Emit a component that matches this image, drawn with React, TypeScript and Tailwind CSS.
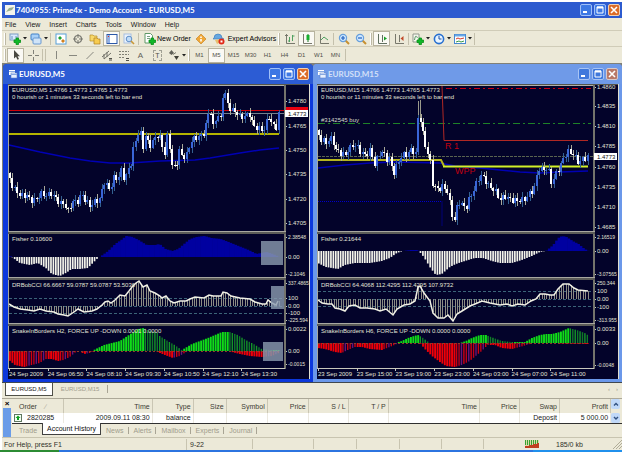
import React from 'react';
import clsx from 'clsx';

type Point = [number, number];

interface Label {
  text: string;
  y: number;
}

interface ChartData {
  title: string;
  x: number;
  info: string[];
  candles: Point[];
  jitter: number;
  fisherBase: number;
  fisher: Point[];
  cciBase: number;
  cciLevels: number[];
  cci: Point[];
  snakeBase: number;
  snakeUp: Point[];
  snakeDown: Point[];
  labels: string[];
  prices: Label[];
  times: string[];
  current: Label;
}

const STEP = 2.42;

const m5: ChartData = {
  title: 'EURUSD,M5',
  x: 8,
  info: ['EURUSD,M5  1.4766 1.4773 1.4765 1.4773', '0 hourish or 1 minutes 33 seconds left to bar end'],
  candles: [
    [9, 175], [12, 185], [15, 190], [18, 192], [20, 196], [25, 195], [30, 199], [34, 201], [38, 197], [42, 193],
    [47, 196], [51, 193], [54, 197], [57, 199], [60, 204], [64, 203], [68, 211], [73, 201], [77, 202], [82, 194],
    [86, 201], [90, 206], [95, 201], [100, 199], [104, 182], [108, 187], [110, 190], [114, 178], [118, 179], [121, 170],
    [124, 178], [127, 174], [131, 163], [134, 146], [138, 133], [141, 134], [143, 147], [146, 134], [149, 146], [152, 143],
    [157, 135], [160, 138], [165, 154], [168, 132], [172, 165], [176, 168], [179, 150], [183, 157], [187, 155], [190, 143],
    [195, 138], [200, 137], [205, 132], [208, 114], [211, 112], [213, 128], [216, 118], [218, 115], [221, 120], [223, 95],
    [225, 93], [228, 105], [232, 110], [236, 112], [240, 117], [245, 116], [250, 114], [253, 126], [258, 128], [263, 131],
    [266, 124], [268, 114], [272, 124], [276, 128], [278, 114],
  ],
  jitter: 3,
  fisherBase: 257,
  fisher: [
    [9, 256], [12, 257], [16, 260], [20, 263], [30, 265], [38, 263], [46, 268], [52, 274], [60, 276], [66, 273],
    [72, 269], [80, 269], [88, 268], [93, 263], [98, 258], [101, 256], [108, 251], [115, 244], [121, 240], [126, 236],
    [132, 237], [138, 240], [146, 245], [155, 245], [159, 244], [165, 249], [172, 251], [178, 249], [185, 243], [190, 239],
    [196, 237], [204, 236], [211, 238], [220, 239], [228, 242], [238, 246], [248, 250], [256, 254], [266, 252], [272, 254], [279, 257],
  ],
  cciBase: 306,
  cciLevels: [298, 313],
  cci: [
    [9, 304], [14, 307], [20, 309], [28, 310], [34, 311], [40, 309], [46, 311], [54, 312], [58, 314], [64, 315],
    [68, 316], [74, 312], [78, 309], [84, 312], [92, 311], [97, 309], [102, 305], [105, 302], [108, 301], [111, 303],
    [115, 300], [120, 295], [125, 296], [129, 291], [132, 287], [136, 283], [139, 281], [143, 287], [147, 285], [150, 291],
    [155, 293], [160, 296], [162, 298], [166, 296], [170, 301], [174, 303], [180, 301], [186, 301], [190, 299], [195, 297],
    [204, 298], [209, 295], [213, 296], [221, 296], [223, 292], [227, 293], [231, 296], [240, 298], [250, 299], [255, 302],
    [262, 304], [266, 304], [268, 300], [272, 303], [276, 305], [278, 301],
  ],
  snakeBase: 351,
  snakeUp: [
    [9, 351], [92, 351], [98, 348], [104, 345], [112, 343], [120, 341], [126, 337], [132, 333], [138, 329], [144, 328],
    [150, 331], [157, 332], [160, 336], [168, 341], [175, 345], [182, 350], [187, 347], [192, 344], [200, 341], [208, 338],
    [215, 335], [222, 332], [230, 332], [238, 335], [246, 340], [254, 344], [262, 349], [270, 350], [279, 350],
  ],
  snakeDown: [
    [9, 360], [15, 365], [24, 367], [32, 365], [40, 363], [46, 359], [52, 359], [58, 361], [64, 360], [70, 357],
    [76, 352], [80, 351], [84, 354], [90, 353], [94, 351], [155, 351], [165, 355], [173, 358], [180, 356], [188, 351],
    [228, 351], [240, 354], [250, 356], [262, 357], [272, 356], [279, 353],
  ],
  labels: ['Fisher 0.10600', 'DRBobCCI 66.6667 59.0787 59.0787 53.5036', 'SnakeInBorders H2, FORCE UP -DOWN  0.0001 0.0000'],
  prices: [
    { text: '1.4780', y: 101 }, { text: '1.4765', y: 126 }, { text: '1.4750', y: 150 }, { text: '1.4735', y: 174 },
    { text: '1.4720', y: 199 }, { text: '1.4705', y: 223 }, { text: '2.38548', y: 237 }, { text: '0.00', y: 257 },
    { text: '-2.1046', y: 274 }, { text: '337.4865', y: 283 }, { text: '100', y: 298 }, { text: '0.00', y: 306 },
    { text: '-100', y: 313 }, { text: '-225.594', y: 320 }, { text: '0.0022', y: 329 }, { text: '0.00', y: 351 },
    { text: '-0.0015', y: 364 },
  ],
  times: ['24 Sep 2009', '24 Sep 06:50', '24 Sep 08:10', '24 Sep 09:30', '24 Sep 10:50', '24 Sep 12:10', '24 Sep 13:30'],
  current: { text: '1.4773', y: 113 },
};

const m15: ChartData = {
  title: 'EURUSD,M15',
  x: 317,
  info: ['EURUSD,M15  1.4766 1.4773 1.4765 1.4773', '0 hourish or 11 minutes 33 seconds left to bar end'],
  candles: [
    [318, 132], [320, 137], [322, 141], [326, 142], [332, 138], [336, 150], [340, 153], [345, 155], [349, 149], [353, 145],
    [357, 146], [361, 153], [366, 155], [371, 149], [374, 166], [380, 152], [384, 153], [386, 162], [388, 155], [392, 168],
    [394, 173], [400, 158], [404, 155], [408, 153], [412, 149], [416, 155], [418, 118], [421, 120], [424, 140], [427, 150],
    [430, 160], [433, 185], [438, 190], [442, 186], [448, 192], [451, 212], [455, 221], [458, 200], [463, 206], [466, 208],
    [469, 200], [475, 187], [480, 175], [484, 178], [490, 188], [494, 189], [500, 200], [505, 196], [510, 199], [517, 201],
    [525, 199], [530, 193], [535, 187], [538, 168], [543, 170], [548, 168], [552, 184], [556, 173], [561, 165], [564, 157],
    [569, 151], [574, 155], [579, 163], [583, 159], [588, 157],
  ],
  jitter: 3,
  fisherBase: 251,
  fisher: [
    [318, 263], [326, 267], [338, 269], [345, 265], [355, 263], [370, 263], [382, 261], [390, 258], [397, 253], [403, 251],
    [411, 250], [416, 250], [419, 251], [424, 257], [430, 267], [436, 275], [442, 274], [450, 267], [456, 264], [465, 261],
    [475, 258], [483, 258], [492, 261], [500, 263], [512, 263], [522, 260], [532, 256], [540, 252], [546, 251], [553, 245],
    [558, 238], [562, 236], [566, 237], [572, 241], [578, 244], [584, 249], [588, 251],
  ],
  cciBase: 299,
  cciLevels: [291, 306],
  cci: [
    [318, 300], [322, 303], [328, 304], [332, 304], [335, 308], [340, 309], [345, 311], [349, 306], [355, 305], [360, 308],
    [367, 308], [375, 309], [380, 311], [386, 309], [393, 315], [397, 309], [404, 305], [410, 304], [415, 301], [418, 287],
    [420, 286], [424, 293], [430, 301], [433, 313], [438, 318], [444, 318], [448, 315], [453, 321], [457, 314], [462, 311],
    [470, 306], [475, 304], [482, 301], [490, 303], [500, 305], [507, 304], [512, 306], [518, 304], [525, 305], [531, 301],
    [536, 299], [540, 294], [545, 294], [550, 295], [554, 295], [558, 289], [563, 284], [569, 284], [574, 288], [578, 290], [588, 291],
  ],
  snakeBase: 343,
  snakeUp: [
    [318, 343], [395, 343], [402, 341], [408, 338], [414, 336], [418, 335], [422, 337], [430, 343], [460, 343], [466, 341],
    [472, 338], [480, 335], [486, 335], [494, 338], [502, 341], [512, 342], [525, 342], [532, 338], [540, 335], [546, 334],
    [552, 334], [560, 332], [569, 328], [577, 330], [585, 333], [588, 335],
  ],
  snakeDown: [
    [318, 348], [325, 349], [335, 352], [342, 353], [348, 350], [355, 347], [362, 347], [370, 349], [382, 350], [390, 347],
    [397, 344], [402, 343], [420, 343], [425, 349], [432, 356], [440, 362], [446, 366], [455, 367], [462, 365], [470, 361],
    [476, 356], [482, 351], [488, 345], [495, 345], [502, 348], [512, 349], [520, 347], [527, 345], [533, 343], [588, 344],
  ],
  labels: ['Fisher 0.21644', 'DRBobCCI 64.4068 112.4295 112.4295 107.9732', 'SnakeInBorders H6, FORCE UP -DOWN  0.0000 0.0000'],
  prices: [
    { text: '1.4860', y: 87 }, { text: '1.4835', y: 106 }, { text: '1.4810', y: 126 }, { text: '1.4785', y: 146 },
    { text: '1.4760', y: 167 }, { text: '1.4735', y: 187 }, { text: '1.4710', y: 207 }, { text: '1.4685', y: 227 },
    { text: '2.16519', y: 237 }, { text: '0.00', y: 251 }, { text: '-3.07565', y: 274 }, { text: '250.344', y: 283 },
    { text: '100', y: 291 }, { text: '0.00', y: 299 }, { text: '-100', y: 307 }, { text: '-313.955', y: 320 },
    { text: '0.0033', y: 329 }, { text: '0.00', y: 343 }, { text: '-0.0048', y: 365 },
  ],
  times: ['23 Sep 2009', '23 Sep 15:00', '23 Sep 19:00', '23 Sep 23:00', '24 Sep 03:00', '24 Sep 07:00', '24 Sep 11:00'],
  current: { text: '1.4773', y: 156 },
};

// linear interpolation between key points
function valueAt(points: Point[], x: number) {
  if (x <= points[0][0]) return points[0][1];
  for (let i = 1; i < points.length; i++) {
    const [x1, y1] = points[i];
    if (x <= x1) {
      const [x0, y0] = points[i - 1];
      return y0 + ((y1 - y0) * (x - x0)) / (x1 - x0);
    }
  }
  return points[points.length - 1][1];
}

function barsOf(x: number) {
  return Array.from({ length: 112 }, (_, i) => x + 2 + i * STEP);
}

function toPath(points: Point[]) {
  return points.map(([x, y], i) => `${i ? 'L' : 'M'}${x} ${y}`).join(' ');
}

function Candles({ data }: { data: ChartData }) {
  const close = (i: number, x: number) => valueAt(data.candles, x) + Math.sin(i * 2.3) * data.jitter;
  return (
    <g shapeRendering="crispEdges">
      {barsOf(data.x).map((x, i) => {
        const open = close(i - 1, x - STEP);
        const end = close(i, x);
        const top = Math.min(open, end);
        const bottom = Math.max(open, end);
        const up = end < open;
        const high = top - 1 - Math.abs(Math.sin(i * 1.7)) * 4;
        const low = bottom + 1 + Math.abs(Math.cos(i * 2.1)) * 4;
        return (
          <g key={i} fill={up ? '#3a66d8' : '#ffffff'}>
            <rect x={x} y={high} width={1} height={low - high} fill={up ? '#33608f' : '#a8a898'} />
            <rect x={x - 1} y={top} width={2} height={Math.max(1, bottom - top)} />
          </g>
        );
      })}
    </g>
  );
}

function Snake({ points, base, bright, dark }: { points: Point[]; base: number; bright: string; dark: string[] }) {
  return (
    <g>
      {barsOf(points[0][0] - 1).map((x, i) => {
        const y = valueAt(points, x);
        const size = Math.abs(y - base);
        if (size < 0.5) return null;
        const growing = size >= Math.abs(valueAt(points, x - STEP) - base);
        return (
          <rect
            key={i}
            x={x - 1}
            y={Math.min(y, base)}
            width={growing ? 1.9 : 1.4}
            height={size}
            fill={growing ? bright : dark[i % dark.length]}
          />
        );
      })}
    </g>
  );
}

function M5Lines() {
  return (
    <g fill="none">
      <path d="M9 113.5H285" stroke="#74808c" />
      <path d="M9 110.5H285" stroke="#d00008" />
      <path d="M9 134H279" stroke="#b4b400" strokeWidth={2} />
      <path d="M9 145L40 152L70 158L90 161L110 163L130 163L160 161L195 160L210 158L240 153L260 150L279 148" stroke="#0000b4" strokeWidth={1.5} />
    </g>
  );
}

function M15Lines() {
  return (
    <g fill="none">
      <path d="M318 156.5H593" stroke="#5a6450" strokeDasharray="3 1" />
      <path d="M446 88.5H591" stroke="#c80014" strokeDasharray="6 3 2 3" />
      <path d="M318 123.5H591" stroke="#1e8228" strokeDasharray="7 3 2 3" />
      <path d="M442 86L444 140.5H588" stroke="#b02824" />
      <path d="M318 201.5H442V226" stroke="#0000c8" strokeDasharray="1 1" />
      <path d="M318 168L345 165L370 163L395 162L440 163L455 166L480 168L500 170L520 172L540 173L560 172L588 171" stroke="#0000b4" strokeWidth={1.5} />
      <path d="M318 160H441L444 166" stroke="#b4b41e" strokeWidth={2} />
      <path d="M443 166.5H588" stroke="#d2f028" strokeWidth={2} />
      <path d="M418.5 101V118M420.5 100V120" stroke="#9a9a8c" />
      <text x={445} y={149} fontSize={9} fill="#c00010">R 1</text>
      <text x={455} y={174} fontSize={9} fill="#c00010">WPP</text>
      <text x={321} y={122} fill="#d8d8cc">#3142545 buy</text>
    </g>
  );
}

function Chart({ data, children }: { data: ChartData; children: React.ReactNode }) {
  const { x, fisher, fisherBase, cci, cciBase, snakeBase } = data;
  const right = x + 276;
  return (
    <svg
      viewBox={`${x} 84 302 295`}
      className="block w-full bg-[#03032a]"
      fontFamily="Liberation Sans, Arial, sans-serif"
      fontSize={6}
      role="img"
      aria-label={data.title}
    >
      {children}
      <Candles data={data} />
      <g>
        {barsOf(x).map((bx, i) => {
          const y = valueAt(fisher, bx);
          return y > fisherBase ? (
            <rect key={i} x={bx - 1} y={fisherBase} width={1.7} height={y - fisherBase} fill="#f4f4ea" />
          ) : (
            <rect key={i} x={bx - 1} y={y} width={3} height={fisherBase - y} fill="#0000a0" />
          );
        })}
      </g>
      <g stroke="#3c6478" strokeDasharray="3 2">
        {data.cciLevels.map((y) => (
          <path key={y} d={`M${x + 1} ${y + 0.5}H${right}`} />
        ))}
        <path d={`M${x + 1} ${cciBase + 0.5}H${right}`} />
      </g>
      <g shapeRendering="crispEdges" fill="#8c8c84">
        {barsOf(x).map((bx, i) => {
          const y = valueAt(cci, bx);
          return <rect key={i} x={bx} y={Math.min(y, cciBase)} width={1} height={Math.abs(y - cciBase)} />;
        })}
      </g>
      <path d={toPath(cci)} fill="none" stroke="#f0f0e4" strokeWidth={1.5} />
      <Snake points={data.snakeUp} base={snakeBase} bright="#10dc18" dark={['#149628', '#0f7a28']} />
      <Snake points={data.snakeDown} base={snakeBase} bright="#f00008" dark={['#d00010', '#c00018', '#6a1478']} />
      <path d={`M${x + 1} ${snakeBase + 0.5}H${right - 6}`} stroke="#8c3c28" strokeDasharray="2 2" />
      {x === 8 && (
        <g fill="#8c9cb0" fillOpacity={0.8}>
          <rect x={261} y={241} width={22} height={24} />
          <rect x={271} y={286} width={14} height={23} />
          <rect x={263} y={342} width={20} height={19} />
        </g>
      )}

      {/* frame and panel dividers */}
      <g shapeRendering="crispEdges">
        <rect x={x} y={84} width={302} height={1} fill="#55554c" />
        <rect x={x} y={85} width={1} height={284} fill="#a8a89c" />
        <rect x={x + 1} y={85} width={276} height={1} fill="#b0b0a8" />
        <rect x={right} y={85} width={2} height={284} fill="#74746c" />
        {[231, 277, 323].map((y) => (
          <g key={y}>
            <rect x={x} y={y} width={278} height={1} fill="#a8a8a0" />
            <rect x={x} y={y + 1} width={278} height={2} fill="#5c5c58" />
          </g>
        ))}
        <rect x={x} y={368} width={277} height={1} fill="#c8c8bc" />
        <rect x={x + 301} y={84} width={1} height={295} fill="#e0dfd0" />
        {data.prices.map(({ y }, i) => (
          <rect key={i} x={right + 2} y={y} width={1} height={1} fill="#c8c8bc" />
        ))}
        {data.times.map((t, i) => (
          <rect key={t} x={x + 1 + i * 16 * STEP} y={369} width={1} height={2} fill="#c8c8bc" />
        ))}
      </g>

      <g fill="#e4e4d8" className="whitespace-pre">
        <text x={x + 4} y={92}>{data.info[0]}</text>
        <text x={x + 4} y={99}>{data.info[1]}</text>
        <text x={x + 4} y={241}>{data.labels[0]}</text>
        <text x={x + 4} y={287}>{data.labels[1]}</text>
        <text x={x + 4} y={333}>{data.labels[2]}</text>
        {data.prices.map(({ text, y }, i) => (
          <text key={i} x={right + 4} y={y + 2} fontSize={text.length > 6 ? 5 : 6}>{text}</text>
        ))}
        {data.times.map((t, i) => (
          <text key={t} x={x + 1 + i * 16 * STEP} y={376}>{t}</text>
        ))}
      </g>
      {x === 8 && <rect x={right + 2} y={107} width={22} height={4} fill="#e80010" />}
      <rect x={right + 1} y={data.current.y - 3} width={23} height={7} fill="#ffffff" />
      <text x={right + 4} y={data.current.y + 3} fill="#101010">{data.current.text}</text>
    </svg>
  );
}

function WindowButtons({ inactive = false, name }: { inactive?: boolean; name: string }) {
  const base = 'flex h-3 w-3 items-center justify-center rounded-xs border text-white';
  const blue = clsx(base, inactive ? 'border-[#a8c4f4] bg-[#3f78dc]' : 'border-[#a0c0f8] bg-[#3d78e4]');
  return (
    <div className="flex gap-0.5">
      <button className={blue} aria-label={`Minimize ${name}`}>
        <svg viewBox="0 0 10 10" className="h-2.5 w-2.5"><rect x={2} y={6} width={4} height={2} fill="currentColor" /></svg>
      </button>
      <button className={blue} aria-label={`Maximize ${name}`}>
        <svg viewBox="0 0 10 10" className="h-2.5 w-2.5">
          <path d="M2 2h6v6h-6z" fill="none" stroke="currentColor" />
          <path d="M2 2.5h6" stroke="currentColor" strokeWidth={2} />
        </svg>
      </button>
      <button className={clsx(base, inactive ? 'border-[#d8c8c8] bg-[#b87868]' : 'border-[#f0d0b0] bg-[#dc6c28]')} aria-label={`Close ${name}`}>
        <svg viewBox="0 0 10 10" className="h-2.5 w-2.5"><path d="M2 2l6 6M8 2l-6 6" stroke="currentColor" strokeWidth={1.6} /></svg>
      </button>
    </div>
  );
}

function ChartWindow({ data, inactive = false, children }: { data: ChartData; inactive?: boolean; children: React.ReactNode }) {
  return (
    <section className={clsx('min-w-0 flex-1 rounded-t pr-[3px] pb-[3px]', inactive ? 'bg-[#6b98ea] pl-1' : 'bg-[#0c38dc] pl-[5px]')}>
      <header className={clsx('-mr-[3px] flex h-5 items-center rounded-t pr-1', inactive ? '-ml-1 bg-[#6f9ae8] pl-1' : '-ml-[5px] bg-[#2c5cd4] pl-[5px]')}>
        <svg viewBox="0 0 10 10" className="h-2.5 w-2.5 shrink-0">
          <rect x={1} y={1} width={6} height={5} fill="#fff" />
          <rect x={3} y={4} width={6} height={5} fill="#e8f0ff" stroke="#5a80c8" strokeWidth={0.6} />
          <path d="M1 2.5h6M3 5.5h6" stroke="#88a8e0" />
        </svg>
        <h2 className={clsx("ml-px flex-1 font-['Lato',sans-serif] text-[8px] leading-3 font-bold", inactive ? 'text-[#d4e0f8]' : 'text-white')}>
          {data.title}
        </h2>
        <WindowButtons inactive={inactive} name={data.title} />
      </header>
      <Chart data={data}>{children}</Chart>
    </section>
  );
}

function Grip() {
  return <span className="mx-px h-3 w-0.5 shrink-0 border-x border-l-white border-r-[#bcb8a4] bg-[#d8d4c4]" />;
}

function Sep() {
  return <span className="mx-px h-3 w-px shrink-0 bg-[#c4c0ac]" />;
}

interface ToolProps {
  label: string;
  drop?: boolean;
  pressed?: boolean;
  text?: boolean;
  children: React.ReactNode;
}

function Tool({ label, drop, pressed, text, children }: ToolProps) {
  return (
    <button
      aria-label={label}
      title={label}
      className={clsx(
        'flex h-[15px] shrink-0 items-center',
        drop ? 'w-[21px] pl-0.5' : text ? 'pl-1' : 'w-[17px] justify-center',
        pressed && 'border border-[#b8b4a0] bg-[#faf9f4]',
      )}
    >
      {text ? children : <svg viewBox="0 0 12 12" className="h-3 w-3 shrink-0" fill="none">{children}</svg>}
      {drop && (
        <svg viewBox="0 0 4 3" className="ml-0.5 h-[3px] w-1 shrink-0"><path d="M0 0h4l-2 2.5z" fill="#202020" /></svg>
      )}
    </button>
  );
}

const PLUS = 'M7 5h2.500v2h2v2.500h-2v2h-2.500v-2h-2v-2.500h2z';

function Magnifier({ sign }: { sign: string }) {
  return (
    <>
      <path d="M7.500 7.500l3.500 3.500" stroke="#c89030" strokeWidth={2} />
      <circle cx={5} cy={5} r={3.6} fill="#d0e8ff" stroke="#68a0dc" strokeWidth={1.2} />
      <path d={sign} stroke="#2060c0" strokeWidth={1.2} />
    </>
  );
}

function MainToolbar() {
  return (
    <div className="flex h-4 items-center border-b border-[#d0ccb8] pl-px" role="toolbar" aria-label="Standard">
      <Grip />
      <Tool label="New chart" drop>
        <rect x={1} y={1} width={8} height={6} fill="#d8e8fc" stroke="#7a9cc4" />
        <path d="M3 3v3M7 3v2" stroke="#6890c0" />
        <path d={PLUS} fill="#10b828" stroke="#089018" strokeWidth={0.8} />
      </Tool>
      <Tool label="Profiles" drop>
        <rect x={1} y={1} width={8} height={6} rx={1} fill="#a8d0f8" stroke="#4080c8" />
        <rect x={3} y={5} width={8} height={6} rx={1} fill="#d0e4f8" stroke="#6898d0" />
      </Tool>
      <Sep />
      <Tool label="Market Watch">
        <rect x={1} y={1} width={10} height={10} fill="#fff" stroke="#58a0d8" />
        <path d="M3 5l2-2 2 2-2 2z" fill="#20a030" />
        <path d="M6 8l2-2 2 2-2 2z" fill="#d08020" />
      </Tool>
      <Tool label="Data Window">
        <circle cx={6} cy={6} r={3.5} stroke="#787870" strokeWidth={1.2} />
        <path d="M6 1v4M6 7v4M1 6h4M7 6h4" stroke="#787870" />
      </Tool>
      <Tool label="Navigator">
        <path d="M1 2h3l1 1h3v5H1z" fill="#f8d868" stroke="#b89028" strokeWidth={0.7} />
        <path d="M5 5h3l1 1h2v5H5z" fill="#f8cc50" stroke="#b08020" strokeWidth={0.7} />
      </Tool>
      <Tool label="Terminal" pressed>
        <rect x={1} y={1.5} width={10} height={9} fill="#fff" stroke="#2c58a8" />
        <path d="M3 2v8" stroke="#90b0e8" strokeWidth={2} />
        <path d="M2 3.500h1" stroke="#e03020" />
      </Tool>
      <Tool label="Strategy Tester">
        <rect x={1} y={1} width={7} height={9} fill="#eaf2fc" stroke="#a8c0e0" />
        <circle cx={6} cy={6} r={2.8} fill="#c0dcf8" stroke="#6090c8" />
        <path d="M8 8l3 3" stroke="#c89838" strokeWidth={1.6} />
      </Tool>
      <Sep />
      <Tool label="New Order" text>
        <svg viewBox="0 0 12 12" className="h-3 w-3 shrink-0" fill="none">
          <path d="M1 .5h5.500l2 2V10H1z" fill="#fff" stroke="#609868" />
          <path d="M3 3.500h3M3 5.500h3" stroke="#78a080" />
          <path d={PLUS} fill="#10b828" stroke="#089018" strokeWidth={0.8} />
        </svg>
        <span className="mr-0.5 ml-px w-[33px] whitespace-nowrap">New Order</span>
      </Tool>
      <Tool label="MetaEditor">
        <path d="M6 1l5 5-5 5-5-5z" fill="#f0a838" stroke="#c88828" strokeWidth={0.7} />
        <path d="M6 3.500v1.500M6 6v2.500" stroke="#fff" strokeWidth={1.6} />
      </Tool>
      <Tool label="Expert Advisors" text>
        <svg viewBox="0 0 12 12" className="h-3 w-3 shrink-0" fill="none">
          <path d="M1 5a4 4 0 0 1 8 0l2 1H0z" fill="#68a8e0" stroke="#3878b8" strokeWidth={0.6} />
          <path d="M2 7l6-1v3l-4 2z" fill="#e8c070" />
          <circle cx={8.5} cy={8.5} r={3} fill="#e02818" />
          <rect x={7.5} y={7.5} width={2} height={2} fill="#fff" />
        </svg>
        <span className="ml-0.5 w-[50px] whitespace-nowrap">Expert Advisors</span>
      </Tool>
      <Grip />
      <Tool label="Bar Chart">
        <path d="M2.500 1v9.500H11M1 2.500h3" stroke="#78786c" />
        <path d="M5.500 4v5M8.500 2v6M8.500 3h2M5.500 8h-1.500" stroke="#50a060" />
      </Tool>
      <Tool label="Candlesticks" pressed>
        <path d="M2.500 1v9.500H11" stroke="#78786c" />
        <path d="M7 1v8" stroke="#187828" />
        <rect x={5.5} y={2} width={3} height={5} fill="#18b030" />
      </Tool>
      <Tool label="Line Chart">
        <path d="M2.500 1v9.500H11" stroke="#78786c" />
        <path d="M3 7l3-3 4 3" stroke="#50a060" />
      </Tool>
      <Sep />
      <Tool label="Zoom In"><Magnifier sign="M3 5h4M5 3v4" /></Tool>
      <Tool label="Zoom Out"><Magnifier sign="M3 5h4" /></Tool>
      <Grip />
      <Tool label="Auto Scroll" pressed>
        <path d="M2.500 1v9.500H11M6.500 2v7" stroke="#607060" />
        <path d="M8 3.500l3 2-3 2z" fill="#18a028" />
      </Tool>
      <Tool label="Chart Shift">
        <path d="M2.500 1v9.500H11M6.500 2v7" stroke="#78786c" />
        <path d="M10.500 3l-3 2.500 3 2.500z" fill="#c04828" />
      </Tool>
      <Sep />
      <Tool label="Indicators" drop>
        <path d="M1 1h6v8H1z" fill="#f8f8f0" stroke="#90988c" />
        <path d="M2.500 7c1-6 2-4 3-2" stroke="#589868" />
        <path d={PLUS} fill="#10b828" stroke="#089018" strokeWidth={0.8} />
      </Tool>
      <Tool label="Periods" drop>
        <circle cx={6} cy={6} r={4.6} fill="#e8f4ff" stroke="#2870d0" strokeWidth={1.6} />
        <path d="M6 3v3h2.500" stroke="#2050a0" />
      </Tool>
      <Tool label="Templates" drop>
        <rect x={0.5} y={1.5} width={11} height={9} fill="#fff" stroke="#4888d0" />
        <path d="M1 2.500h10" stroke="#68a8e8" strokeWidth={2} />
        <path d="M2 6l2-1 2 1 4-1" stroke="#d03828" />
        <path d="M2 9l3-1 2 1 3-1" stroke="#389848" />
      </Tool>
      <Sep />
    </div>
  );
}

const periods = ['M1', 'M5', 'M15', 'M30', 'H1', 'H4', 'D1', 'W1', 'MN'];

function LineToolbar() {
  return (
    <div className="flex h-4 items-center pl-px" role="toolbar" aria-label="Line Studies">
      <Grip />
      <Tool label="Cursor" pressed>
        <path d="M4 1v8.500l2-1.800 1.500 3 1.500-.8-1.400-2.700H10z" fill="#484840" />
      </Tool>
      <Tool label="Crosshair">
        <path d="M6.500 1v4M6.500 8v4M1 6.500h4M8 6.500h4" stroke="#808078" />
      </Tool>
      <Sep />
      <Sep />
      <Tool label="Vertical Line"><path d="M6.500 2v8" stroke="#888880" /></Tool>
      <Tool label="Horizontal Line"><path d="M2 6.500h8" stroke="#888880" /></Tool>
      <Tool label="Trendline"><path d="M2.500 10l7-7" stroke="#888880" /></Tool>
      <Tool label="Equidistant Channel">
        <path d="M1 8l7-6M3 10l7-6M3 5v5M6 3v5" stroke="#707068" />
        <path d="M8 11h3M8 9.500h3" stroke="#505048" />
      </Tool>
      <Tool label="Fibonacci Retracement">
        <path d="M1 2.500h10M1 5.500h10M1 8.500h6" stroke="#808074" strokeDasharray="2 1" />
        <path d="M8 9.500h3M8 11.500h3" stroke="#505048" />
      </Tool>
      <button className="h-[15px] w-[17px] text-[8px] leading-[15px] text-[#606058]" title="Text">A</button>
      <button className="flex h-[15px] w-[17px] items-center justify-center text-[7px] leading-[9px] text-[#505048]" title="Text Label">
        <span className="w-[9px] border border-dashed border-[#a0a094]">T</span>
      </button>
      <Tool label="Arrows" drop>
        <path d="M1 4l2.500-3 2.500 3-2.500 2z" fill="#606058" />
        <path d="M6 7h5l-2.500 4z" fill="#404038" />
        <path d="M5 5.500l3-2" stroke="#808074" />
      </Tool>
      <Grip />
      {periods.map((p) => (
        <button
          key={p}
          className={clsx(
            'h-[15px] w-[17px] text-[6px] text-[#505048]',
            p === 'M5' && 'border border-[#b8b4a0] bg-[#faf9f4]',
          )}
        >
          {p}
        </button>
      ))}
      <Sep />
    </div>
  );
}

const columns = [
  { name: 'Order', width: 'w-[51px]', value: '2820285' },
  { name: 'Time', width: 'w-[89px]', value: '2009.09.11 08:30' },
  { name: 'Type', width: 'w-[41px]', value: 'balance' },
  { name: 'Size', width: 'w-[33px]', value: '' },
  { name: 'Symbol', width: 'w-[41px]', value: '' },
  { name: 'Price', width: 'w-[41px]', value: '' },
  { name: 'S / L', width: 'w-10', value: '' },
  { name: 'T / P', width: 'w-10', value: '' },
  { name: 'Time', width: 'w-[91px]', value: '' },
  { name: 'Price', width: 'w-10', value: '' },
  { name: 'Swap', width: 'w-10', value: 'Deposit' },
  { name: 'Profit', width: 'w-[51px]', value: '5 000.00' },
];

const tabs = ['Trade', 'Account History', 'News', 'Alerts', 'Mailbox', 'Experts', 'Journal'];

function Terminal() {
  return (
    <section className="mt-px flex border-t border-[#aca898]">
      <div className="ml-px flex w-2 flex-col">
        <button className="h-[9px] text-[8px] leading-[9px] font-bold text-black" aria-label="Close terminal">×</button>
        <div className="flex-1 bg-[#6a9ce8]" />
      </div>
      <div className="min-w-0 flex-1 pl-px">
        <div className="flex border-b border-[#303030]">
          <table className="w-full table-fixed border-collapse">
            <thead>
              <tr className="h-3.5 text-[#3c3c34]">
                {columns.map((c, i) => (
                  <th key={i} className={clsx('border-r border-[#cac6b4] p-0 pr-0.5 font-normal', c.width, i ? 'text-right' : 'pl-[7px] text-left')}>
                    {c.name}
                    {i === 0 && <span className="ml-2 text-[#a8a494]">∕</span>}
                  </th>
                ))}
              </tr>
            </thead>
            <tbody>
              <tr className="h-[10px] bg-white leading-[10px] text-[#202020]">
                {columns.map((c, i) => (
                  <td key={i} className="border-r border-[#ece9e0] p-0 pr-0.5 text-right whitespace-nowrap">
                    {i === 0 ? (
                      <span className="flex items-center gap-[5px] pl-0.5">
                        <svg viewBox="0 0 8 8" className="h-2 w-2">
                          <rect x={0.5} y={0.5} width={7} height={7} fill="#f4fff4" stroke="#607860" />
                          <path d="M4 1.500l2.500 2.500h-1.500v2h-2v-2h-1.500z" fill="#10a020" />
                        </svg>
                        {c.value}
                      </span>
                    ) : (
                      c.value
                    )}
                  </td>
                ))}
              </tr>
            </tbody>
          </table>
          <div className="flex w-[9px] shrink-0 flex-col justify-between">
            {['M2 5.500l2-2 2 2', 'M2 3l2 2 2-2'].map((d, i) => (
              <button key={d} className="h-[10px] rounded-xs bg-[#c0d8f8]" aria-label={i ? 'Scroll down' : 'Scroll up'}>
                <svg viewBox="0 0 8 8" className="mx-auto h-2 w-2"><path d={d} fill="none" stroke="#305080" strokeWidth={1.4} /></svg>
              </button>
            ))}
          </div>
          <span className="w-0.5" />
        </div>
        <nav className="flex h-[13px] items-start pl-0.5 text-[#a09c8c]">
          {tabs.map((t) => {
            const active = t === 'Account History';
            return (
              <button
                key={t}
                className={clsx(
                  'h-3 shrink-0 leading-[11px] whitespace-nowrap',
                  active
                    ? '-mt-px border-r border-b border-l border-[#404040] bg-white px-1 text-[#101010]'
                    : 'px-[5px]',
                )}
              >
                {t}
                {!active && t !== 'Trade' && <span className="-mr-[5px] ml-1 border-r border-[#a8a494]" />}
              </button>
            );
          })}
        </nav>
      </div>
    </section>
  );
}

function StatusBar() {
  return (
    <footer className="flex h-[13px] items-center border-t border-[#c8c4b0] pl-0.5 leading-[11px] text-[#303028]">
      <span className="w-[182px]">For Help, press F1</span>
      <span className="w-[66px] border-l border-[#c8c4b0] pl-[3px]">9-22</span>
      {['w-[61px]', 'w-[43px]', 'w-[43px]', 'w-[42px]', 'w-[42px]'].map((w, i) => (
        <span key={i} className={clsx('h-2.5 border-l border-[#c8c4b0]', w)} />
      ))}
      <span className="flex h-2.5 flex-1 items-center border-l border-[#c8c4b0] pl-[41px]">
        <svg viewBox="0 0 14 8" className="h-2 w-3.5" shapeRendering="crispEdges">
          <path d="M0 0h14v5L0 7z" fill="#d8dca8" />
          {[0, 2, 4, 6, 8, 10, 12].map((x) => (
            <g key={x}>
              <rect x={x} y={0} width={1} height={5} fill="#38a030" />
              <rect x={x} y={6 - x / 4} width={2} height={2 + x / 4} fill="#c04020" />
            </g>
          ))}
        </svg>
        <span className="ml-[17px]">185/0 kb</span>
      </span>
      <svg viewBox="0 0 10 10" className="h-2.5 w-2.5"><path d="M1 10l9-9M4 10l6-6M7 10l3-3" stroke="#b0ac98" /></svg>
    </footer>
  );
}

export default function App() {
  return (
    <div className="bg-white pt-0.5 font-['Liberation_Sans',Arial,sans-serif] text-[7px] leading-[9px]">
      <main className="mr-[3px] ml-0.5 bg-[#ece9d8]">
        <header className="flex h-4 items-center bg-[#2d5bcf] pr-0.5 pl-[3px]">
          <svg viewBox="0 0 10 10" className="h-2.5 w-2.5 shrink-0">
            <rect width={10} height={10} fill="#f4f4ec" />
            <path d="M1 7l3-4 5-1-2 3z" fill="#98b090" />
          </svg>
          <h1 className="ml-px flex-1 font-['Lato',sans-serif] text-[8px] leading-3 font-bold text-white">
            7404955: Prime4x - Demo Account - EURUSD,M5
          </h1>
          <WindowButtons name="terminal" />
        </header>
        <nav className="flex h-[13px] items-center gap-[9px] border-b border-[#d0ccb8] pl-[3px] text-[#202020]">
          {['File', 'View', 'Insert', 'Charts', 'Tools', 'Window', 'Help'].map((m) => (
            <button key={m}>{m}</button>
          ))}
        </nav>
        <MainToolbar />
        <LineToolbar />
        <div className="flex border-t border-b border-t-[#808078] border-b-[#404850] bg-[#808078] pl-px">
          <ChartWindow data={m5}>
            <M5Lines />
          </ChartWindow>
          <ChartWindow data={m15} inactive>
            <M15Lines />
          </ChartWindow>
        </div>
        <nav className="flex h-3.5 items-start pl-[3px] text-[6px]">
          <button className="h-[13px] w-12 border-r border-b border-l border-[#505048] bg-white text-[#202020]">EURUSD,M5</button>
          <button className="h-[13px] w-[54px] text-[#a09c8c]">EURUSD,M15</button>
          <span className="mt-0.5 h-2 w-px bg-[#a8a494]" />
          <span className="ml-auto flex gap-1.5 pt-0.5 pr-1 text-[#a09c8c]">
            <button aria-label="Scroll tabs left">‹</button>
            <button aria-label="Scroll tabs right">›</button>
          </span>
        </nav>
        <Terminal />
        <StatusBar />
      </main>
      <div className="mr-[3px] flex h-0.5">
        <div className="w-[59px] bg-[#2c8c34]" />
        <div className="flex-1 bg-[#2c74e0]" />
        <div className="w-[89px] bg-[#2090ec]" />
      </div>
    </div>
  );
}
